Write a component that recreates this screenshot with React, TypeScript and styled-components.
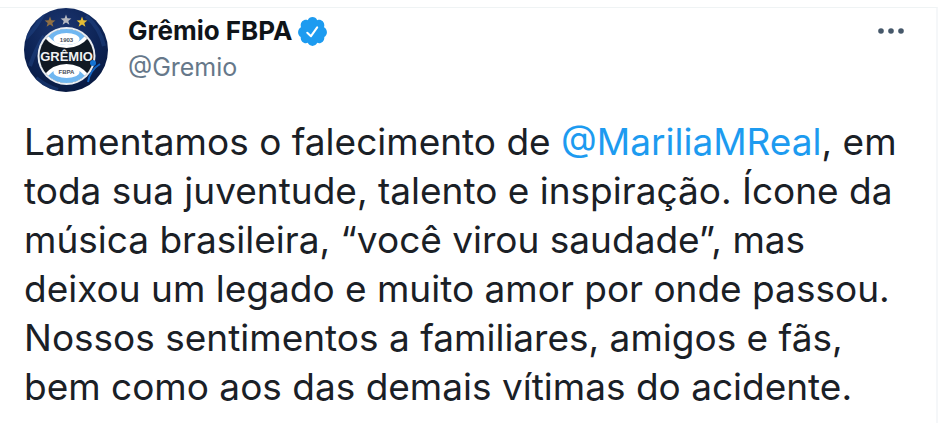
import React from "react";
import styled, { createGlobalStyle } from "styled-components";

const GlobalStyle = createGlobalStyle`
  *, *::before, *::after { box-sizing: border-box; }
  html, body { margin: 0; background: #fff; }
  #root { overflow-x: hidden; }
`;

const Page = styled.main`
  padding: 7px 12px 0 0;
  background: #fff;
  color: #1a2026;
  font-family: Inter, "Liberation Sans", sans-serif;
`;

const Tweet = styled.article`
  display: flex;
  flex-direction: column;
  gap: 25px;
  min-height: calc(100vh - 7px);
  padding: 0 24px 12px;
  border-top: 1px solid #eff3f4;
  border-right: 2px solid #f5f7f9;
`;

const Header = styled.header`
  display: flex;
  align-items: flex-start;
  gap: 20px;
`;

const AvatarLink = styled.a`
  display: block;
  flex: none;
  width: 84px;
  height: 84px;
  border-radius: 50%;
  svg { display: block; }
`;

const Author = styled.div`
  display: flex;
  flex: 1;
  flex-direction: column;
  align-items: flex-start;
  min-width: 0;
  padding-top: 5px;
`;

const NameLink = styled.a`
  display: flex;
  align-items: center;
  gap: 4px;
  color: #0f1419;
  font-size: 26px;
  font-weight: 700;
  line-height: 36px;
  text-decoration: none;
`;

const HandleLink = styled.a`
  color: #66788a;
  font-size: 25px;
  line-height: 36px;
  text-decoration: none;
`;

const MoreButton = styled.button`
  display: flex;
  align-items: center;
  justify-content: center;
  width: 40px;
  height: 40px;
  margin-top: 3px;
  padding: 0;
  border: 0;
  border-radius: 50%;
  background: transparent;
  color: #46586a;
  cursor: pointer;
`;

const Body = styled.p`
  margin: 0;
  font-size: 37px;
  line-height: 49px;
`;

const Mention = styled.a`
  color: #1d9bf0;
  text-decoration: none;
`;

const STAR = "M0-5.4 1.4-1.8 5.4-1.6 2.3.9 3.4 4.8 0 2.5-3.4 4.8-2.3.9-5.4-1.6-1.4-1.8Z";

function Crest() {
  return (
    <svg width="84" height="84" viewBox="0 0 84 84" aria-hidden="true">
      <defs>
        <clipPath id="disc"><circle cx="42" cy="42" r="42" /></clipPath>
        <clipPath id="ball"><circle cx="42.5" cy="48" r="27" /></clipPath>
        <radialGradient id="night" cx="45%" cy="25%" r="75%">
          <stop offset="0" stopColor="#1b356f" />
          <stop offset="0.6" stopColor="#0d2456" />
          <stop offset="1" stopColor="#081a42" />
        </radialGradient>
      </defs>
      <g clipPath="url(#disc)">
        <rect width="84" height="84" fill="url(#night)" />
        <path d="M2 30Q14 18 20 4M6 58Q12 40 20 28M62 8Q76 20 80 38M12 70Q22 78 34 82" stroke="#24498c" strokeWidth="4" fill="none" opacity=".45" />
        <path d="M64 74Q66 62 76 56M70 77Q76 70 81 64" stroke="#1265c4" strokeWidth="2" fill="none" />
      </g>
      <path d={STAR} transform="translate(26 14)" fill="#917044" />
      <path d={STAR} transform="translate(42 12)" fill="#b5b8c0" />
      <path d={STAR} transform="translate(58 14)" fill="#e5bd35" />
      <circle cx="42.5" cy="48" r="29" fill="#e9edf2" />
      <g clipPath="url(#ball)">
        <rect x="14" y="20" width="58" height="56" fill="#101923" />
        <path d="M16 20H69L65 29Q56 40 42.5 40T20 29Z" fill="#fff" />
        <path d="M22 20H63L61 28Q53 37 42.5 37T24 28Z" fill="#70b7f1" />
        <path d="M16 77H69L65 67Q56 56 42.5 56T20 67Z" fill="#fff" />
        <path d="M22 77H63L61 68Q53 59 42.5 59T24 68Z" fill="#70b7f1" />
        <ellipse cx="42.5" cy="31" rx="13" ry="6" fill="#fff" />
        <ellipse cx="42.5" cy="64" rx="13" ry="6" fill="#fff" />
      </g>
      <g fontFamily="Liberation Sans, Arial, sans-serif" fontWeight="700" textAnchor="middle">
        <text x="42.5" y="34" fontSize="6" fill="#49515c">1903</text>
        <text x="42.5" y="66" fontSize="6" fill="#49515c">FBPA</text>
        <text x="42.5" y="53" fontSize="13" fill="#f0f2f4">GRÊMIO</text>
      </g>
      <circle cx="69" cy="55" r="3" fill="#1473d4" />
    </svg>
  );
}

function VerifiedBadge() {
  return (
    <svg width="33" height="33" viewBox="0 0 24 24" role="img" aria-label="Conta verificada">
      <path fill="#1d9bf0" d="M22.5 12.5c0-1.58-.875-2.95-2.148-3.6.154-.435.238-.905.238-1.4 0-2.21-1.71-3.998-3.818-3.998-.47 0-.92.084-1.336.25C14.818 2.415 13.51 1.5 12 1.5s-2.816.917-3.437 2.25c-.415-.165-.866-.25-1.336-.25-2.11 0-3.818 1.79-3.818 4 0 .494.083.964.237 1.4-1.272.65-2.147 2.018-2.147 3.6 0 1.495.782 2.798 1.942 3.486-.02.17-.032.34-.032.514 0 2.21 1.708 4 3.818 4 .47 0 .92-.086 1.335-.25.62 1.334 1.926 2.25 3.437 2.25 1.512 0 2.818-.916 3.437-2.25.415.163.865.248 1.336.248 2.11 0 3.818-1.79 3.818-4 0-.174-.012-.344-.033-.513 1.158-.687 1.943-1.99 1.943-3.484z" />
      <path d="M8.2 12.9 10.9 15.4 15.4 9" fill="none" stroke="#fff" strokeWidth="1.5" strokeLinecap="round" strokeLinejoin="round" />
    </svg>
  );
}

function MoreIcon() {
  return (
    <svg width="30" height="8" viewBox="0 0 30 8" fill="currentColor" aria-hidden="true">
      <circle cx="4" cy="4" r="2.8" />
      <circle cx="14" cy="4" r="2.8" />
      <circle cx="24" cy="4" r="2.8" />
    </svg>
  );
}

export default function App() {
  return (
    <>
      <GlobalStyle />
      <Page>
        <Tweet>
          <Header>
            <AvatarLink href="#gremio" aria-label="Grêmio FBPA">
              <Crest />
            </AvatarLink>
            <Author>
              <NameLink href="#gremio">
                Grêmio FBPA
                <VerifiedBadge />
              </NameLink>
              <HandleLink href="#gremio">@Gremio</HandleLink>
            </Author>
            <MoreButton type="button" aria-label="Mais">
              <MoreIcon />
            </MoreButton>
          </Header>
          <Body>
            Lamentamos o falecimento de <Mention href="#mariliamreal">@MariliaMReal</Mention>, em
            toda sua juventude, talento e inspiração. Ícone da música brasileira, “você virou
            saudade”, mas deixou um legado e muito amor por onde passou. Nossos sentimentos a
            familiares, amigos e fãs, bem como aos das demais vítimas do acidente.
          </Body>
        </Tweet>
      </Page>
    </>
  );
}
